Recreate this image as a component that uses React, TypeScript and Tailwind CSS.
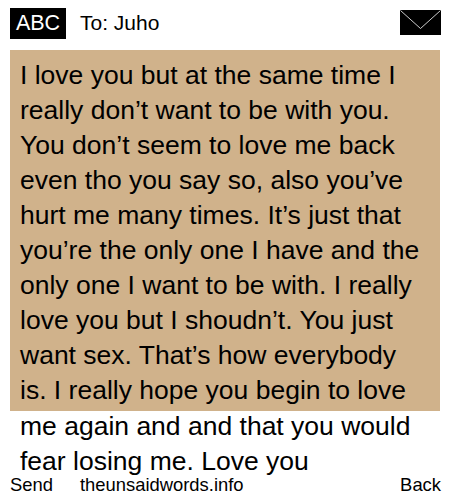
const lines = [
  "I love you but at the same time I",
  "really don’t want to be with you.",
  "You don’t seem to love me back",
  "even tho you say so, also you’ve",
  "hurt me many times. It’s just that",
  "you’re the only one I have and the",
  "only one I want to be with. I really",
  "love you but I shoudn’t. You just",
  "want sex. That’s how everybody",
  "is. I really hope you begin to love",
];
const rest = ["me again and and that you would", "fear losing me. Love you"];

export default function App() {
  return (
    <div className="w-[450px] h-[500px] bg-white text-black overflow-hidden flex flex-col font-['Liberation_Sans',Arial,sans-serif]">
      <div className="h-[50px] flex items-start pt-[8px] pl-[10px] pr-[9px]">
        <div className="w-[56px] h-[31px] bg-black text-white text-[21.5px] leading-[30px] text-center">ABC</div>
        <div className="ml-[14px] text-[21px] leading-[30px]">To: Juho</div>
        <svg className="ml-auto mt-[2px]" width="41" height="25" viewBox="0 0 41 25">
          <rect width="41" height="25" fill="#000" />
          <path d="M0.5 0.5 L20.5 18.5 L40.5 0.5" fill="none" stroke="#fff" strokeWidth="0.8" />
        </svg>
      </div>
      <div className="mx-[10px] h-[361px] bg-[#d0b28b] pl-[10px] pt-[8px] text-[26.5px] leading-[35px] whitespace-nowrap">
        {lines.map((l) => (<div key={l}>{l}</div>))}
      </div>
      <div className="pl-[20px] text-[26.5px] leading-[35px] whitespace-nowrap -mt-[2px]">
        {rest.map((l) => (<div key={l}>{l}</div>))}
      </div>
      <div className="flex text-[18.4px] leading-[20px] pl-[10px] pr-[9px] -mt-[4px]">
        <span>Send</span>
        <span className="ml-[27px]">theunsaidwords.info</span>
        <span className="ml-auto">Back</span>
      </div>
    </div>
  );
}
